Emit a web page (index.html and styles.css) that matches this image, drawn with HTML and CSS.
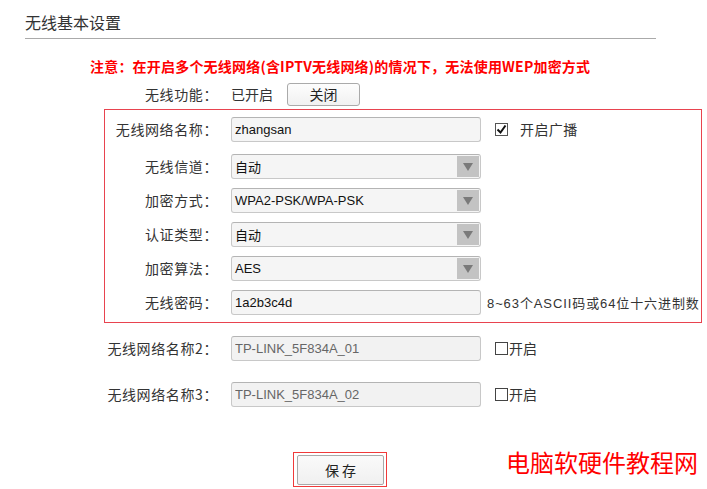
FILE: index.html
```
<!DOCTYPE html>
<html lang="zh-CN">
<head>
  <meta charset="UTF-8" />
  <meta name="viewport" content="width=device-width, initial-scale=1.0"/>
  <title>无线基本设置</title>
  <link rel="stylesheet" href="styles.css">
</head>
<body>
  <h2 class="titulo">无线基本设置</h2>

  <p class="aviso">注意：在开启多个无线网络(含IPTV无线网络)的情况下，无法使用WEP加密方式</p>

  <div class="form">
    <div class="linha linha-func">
      <span class="rotulo">无线功能：</span>
      <span class="estado">已开启</span>
      <button class="botao botao-fechar">关闭</button>
    </div>

    <div class="caixa">
      <div class="linha">
        <span class="rotulo">无线网络名称：</span>
        <input class="campo" type="text" value="zhangsan" />
        <span class="check marcado"><svg width="11" height="11" viewBox="0 0 11 11"><path d="M1.5 5.5 L4.5 8.5 L9.5 1.5" fill="none" stroke="#111" stroke-width="2"/></svg></span>
        <span class="extra">开启广播</span>
      </div>
      <div class="linha">
        <span class="rotulo">无线信道：</span>
        <div class="campo select"><span>自动</span><i class="seta"></i></div>
      </div>
      <div class="linha">
        <span class="rotulo">加密方式：</span>
        <div class="campo select"><span>WPA2-PSK/WPA-PSK</span><i class="seta"></i></div>
      </div>
      <div class="linha">
        <span class="rotulo">认证类型：</span>
        <div class="campo select"><span>自动</span><i class="seta"></i></div>
      </div>
      <div class="linha">
        <span class="rotulo">加密算法：</span>
        <div class="campo select"><span>AES</span><i class="seta"></i></div>
      </div>
      <div class="linha">
        <span class="rotulo">无线密码：</span>
        <input class="campo" type="text" value="1a2b3c4d" />
        <span class="dica">8~63个ASCII码或64位十六进制数</span>
      </div>
    </div>

    <div class="linha linha-ssid">
      <span class="rotulo">无线网络名称2：</span>
      <input class="campo desativado" type="text" value="TP-LINK_5F834A_01" />
      <span class="check vazio"></span><span class="abrir">开启</span>
    </div>
    <div class="linha linha-ssid ssid3">
      <span class="rotulo">无线网络名称3：</span>
      <input class="campo desativado" type="text" value="TP-LINK_5F834A_02" />
      <span class="check vazio"></span><span class="abrir">开启</span>
    </div>

    <div class="salvar">
      <span class="moldura"><button class="botao botao-salvar">保 存</button></span>
    </div>
  </div>

  <div class="marca">电脑软硬件教程网</div>
</body>
</html>
```

FILE: styles.css
```
body {
  font-family: "Noto Sans CJK SC", "Liberation Sans", sans-serif;
  color: #333;
  background: #fff;
  margin: 0;
  position: relative;
  width: 707px;
  height: 489px;
  overflow: hidden;
}
.titulo {
  font-size: 16px;
  font-weight: normal;
  line-height: 20px;
  margin: 12px 0 0 25px;
  padding-bottom: 6px;
  width: 631px;
  border-bottom: 1px solid #aaa;
  color: #333;
}
.aviso {
  margin: 17px 0 0 90px;
  font-size: 14px;
  line-height: 20px;
  font-weight: bold;
  color: #f00;
  letter-spacing: 0.2px;
}
.form {
  margin-left: 104px;
  width: 598px;
}
.linha {
  display: flex;
  align-items: center;
  height: 24px;
  font-size: 14px;
}
.linha-func {
  margin-top: 7px;
  height: 22px;
}
.rotulo {
  width: 114px;
  text-align: right;
  white-space: nowrap;
  margin-right: 13px;
  letter-spacing: 0.6px;
}
.botao {
  font-family: "Noto Sans CJK SC", sans-serif;
  font-size: 14px;
  color: #222;
  background: linear-gradient(#fdfdfd, #f1f1f1);
  border: 1px solid #aaa;
  border-radius: 3px;
  padding: 0;
  cursor: pointer;
}
.botao-fechar {
  width: 73px;
  height: 23px;
  margin-left: 14px;
  line-height: 20px;
}
.caixa {
  margin-top: 4px;
  border: 1px solid #e8434f;
  padding: 7px 0 8px;
}
.caixa .rotulo {
  width: 113px;
}
.caixa .linha {
  margin-bottom: 10px;
}
.caixa .linha:first-child {
  margin-bottom: 13px;
}
.caixa .linha:last-child {
  margin-bottom: 0;
}
.campo {
  box-sizing: border-box;
  width: 250px;
  height: 25px;
  border: 1px solid #c8c8c8;
  border-top-color: #b4b4b4;
  border-radius: 3px;
  background: #f5f5f5;
  font-family: "Liberation Sans", "Noto Sans CJK SC", sans-serif;
  font-size: 13px;
  color: #111;
  padding: 0 3px;
  margin: 0;
  outline: none;
}
.select {
  display: flex;
  align-items: center;
  justify-content: space-between;
  padding-right: 1px;
}
.seta {
  width: 22px;
  height: 21px;
  background: #c3c3c3;
  position: relative;
}
.seta::after {
  content: "";
  position: absolute;
  left: 6px;
  top: 7px;
  border-left: 5px solid transparent;
  border-right: 5px solid transparent;
  border-top: 8px solid #7a7a7a;
}
.check {
  box-sizing: border-box;
  display: inline-flex;
  align-items: center;
  justify-content: center;
  width: 13px;
  height: 13px;
  border: 1px solid #555;
  background: #fff;
}
.marcado {
  margin-left: 14px;
}
.extra {
  margin-left: 12px;
  letter-spacing: 0.4px;
}
.dica {
  margin-left: 6px;
  font-family: "Liberation Sans", "Noto Sans CJK SC", sans-serif;
  font-size: 13px;
  letter-spacing: 0.9px;
  white-space: nowrap;
}
.linha-ssid {
  margin-top: 13px;
}
.ssid3 {
  margin-top: 22px;
}
.desativado {
  color: #666;
  background: #f2f2f2;
}
.linha-ssid .check {
  margin-left: 14px;
  border-color: #444;
}
.abrir {
  margin-left: 1px;
}
.salvar {
  margin-top: 46px;
  padding-left: 189px;
}
.moldura {
  display: inline-block;
  border: 1px solid #f03a3a;
  padding: 2px 2px 1px 3px;
}
.botao-salvar {
  display: block;
  width: 87px;
  height: 30px;
  border-radius: 2px;
  font-size: 14px;
  background: linear-gradient(#fafafa, #f0f0f0);
  border-color: #a9a9a9;
}
.marca {
  position: absolute;
  left: 506px;
  top: 446px;
  font-size: 24px;
  line-height: 32px;
  color: #f00;
}
```
